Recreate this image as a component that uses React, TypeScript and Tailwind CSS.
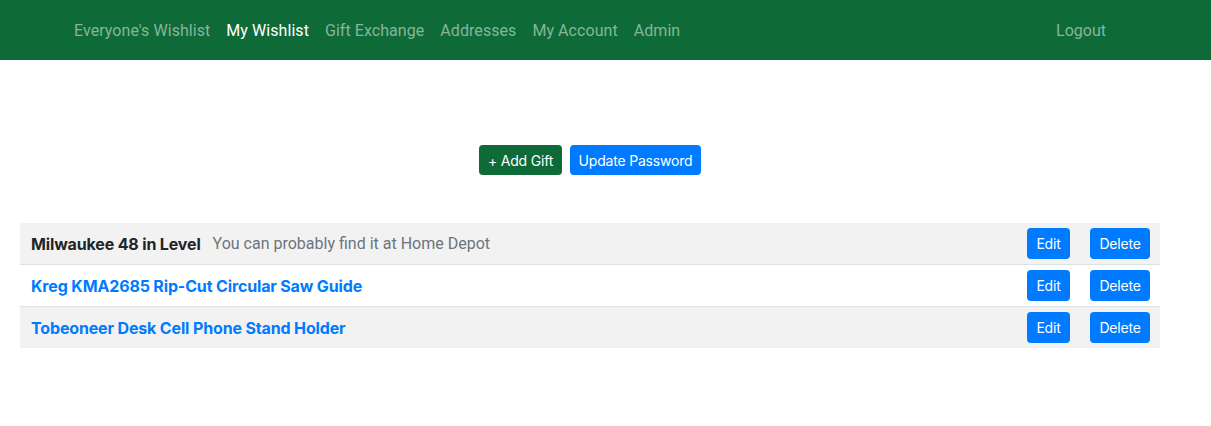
import React from "react";

const roboto = { fontFamily: "Roboto, 'Noto Sans', sans-serif" };
const inter = { fontFamily: "Inter, 'Noto Sans', sans-serif" };

const items = [
  { name: "Milwaukee 48 in Level", desc: "You can probably find it at Home Depot", link: false },
  { name: "Kreg KMA2685 Rip-Cut Circular Saw Guide", desc: "", link: true },
  { name: "Tobeoneer Desk Cell Phone Stand Holder", desc: "", link: true },
];

export default function App() {
  return (
    <div className="min-h-[426px] bg-white" style={roboto}>
      <nav className="h-[60px] bg-[#0e6b38] flex items-center pt-[2px]">
        <div className="flex items-center pl-[66px] text-[16px] tracking-[0.06px]">
          <a className="px-2 text-[#86b59b]">Everyone's Wishlist</a>
          <a className="px-2 text-white">My Wishlist</a>
          <a className="px-2 text-[#86b59b]">Gift Exchange</a>
          <a className="px-2 text-[#86b59b]">Addresses</a>
          <a className="px-2 text-[#86b59b]">My Account</a>
          <a className="px-2 text-[#86b59b]">Admin</a>
        </div>
        <div className="ml-auto pr-[97px] text-[16px]">
          <a className="px-2 text-[#86b59b]">Logout</a>
        </div>
      </nav>
      <div className="w-[1180px] flex justify-center gap-2 mt-[85px]" style={inter}>
        <button className="h-[30px] w-[83px] rounded bg-[#0e6b38] text-white text-[14px] tracking-[-0.2px]">+ Add Gift</button>
        <button className="h-[30px] w-[131px] rounded bg-[#007bff] text-white text-[14px] tracking-[-0.2px]">Update Password</button>
      </div>
      <div className="ml-5 w-[1140px] mt-[48px]">
        {items.map((it, i) => (
          <div
            key={i}
            className={`flex items-center pl-[11px] pr-[10px] ${i > 0 ? "border-t border-[#dee2e6] h-[42px]" : "h-[41px]"} ${i % 2 === 0 ? "bg-[#f2f2f2]" : "bg-white"}`}
          >
            <span
              className={`font-bold text-[16px] tracking-[-0.15px] ${it.link ? "text-[#007bff]" : "text-[#212529]"}`}
              style={inter}
            >
              {it.name}
            </span>
            {it.desc && <span className="ml-3 text-[16px] text-[#6c757d]">{it.desc}</span>}
            <div className="ml-auto flex gap-5" style={inter}>
              <button className="h-[31px] w-[43px] rounded bg-[#007bff] text-white text-[14px] tracking-[-0.2px]">Edit</button>
              <button className="h-[31px] w-[60px] rounded bg-[#007bff] text-white text-[14px] tracking-[-0.2px]">Delete</button>
            </div>
          </div>
        ))}
      </div>
    </div>
  );
}
